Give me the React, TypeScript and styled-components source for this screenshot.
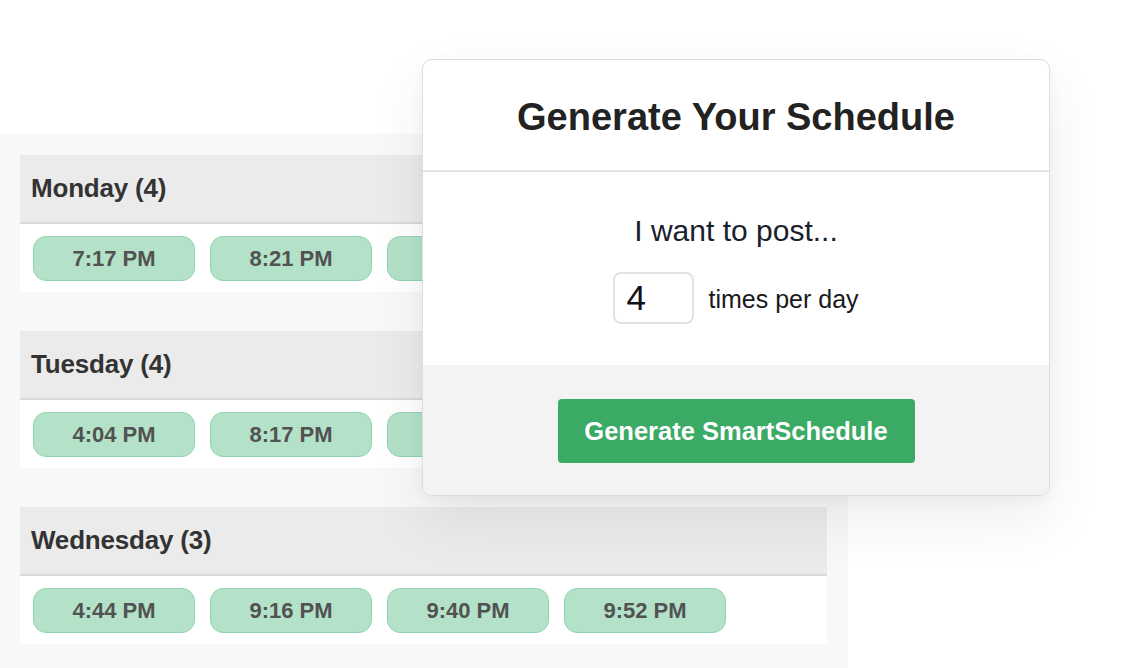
import React from "react";
import styled, { createGlobalStyle } from "styled-components";

const Global = createGlobalStyle`
  html, body { margin: 0; padding: 0; background: #ffffff; }
  body { font-family: "Liberation Sans", Arial, Helvetica, sans-serif; }
  #root { width: 1129px; height: 668px; overflow: hidden; }
`;

const Page = styled.div`
  position: relative;
  width: 1129px;
  height: 668px;
  padding-top: 134px;
  box-sizing: border-box;
  background: #ffffff;
`;

const SchedulePanel = styled.div`
  width: 848px;
  height: 534px;
  box-sizing: border-box;
  background: #f7f8fa;
  padding: 21px 21px 0 20px;
  display: flex;
  flex-direction: column;
  gap: 39px;
`;

const DaySection = styled.section`
  display: flex;
  flex-direction: column;
`;

const DayHeader = styled.div`
  height: 67px;
  background: #ebebeb;
  border-bottom: 2px solid #dadada;
  display: flex;
  align-items: center;
  padding-left: 11px;
  font-size: 26px;
  font-weight: 700;
  color: #333333;
  letter-spacing: -0.2px;
`;

const TimeRow = styled.div`
  height: 68px;
  box-sizing: border-box;
  background: #ffffff;
  display: flex;
  gap: 15px;
  padding: 12px 13px 11px;
`;

const TimePill = styled.div`
  width: 162px;
  height: 45px;
  flex: none;
  box-sizing: border-box;
  border-radius: 13px;
  background: #b3e2c9;
  border: 1px solid #92d4b0;
  display: flex;
  align-items: center;
  justify-content: center;
  font-size: 22px;
  font-weight: 700;
  color: #525252;
`;

const Modal = styled.div`
  position: absolute;
  left: 422px;
  top: 59px;
  width: 628px;
  height: 437px;
  box-sizing: border-box;
  border: 1px solid #dddddd;
  border-radius: 10px;
  background: #ffffff;
  overflow: hidden;
  display: flex;
  flex-direction: column;
  box-shadow: 0 24px 60px rgba(0, 0, 0, 0.07), 0 4px 14px rgba(0, 0, 0, 0.04);
`;

const ModalHeader = styled.div`
  height: 110px;
  flex: none;
  display: flex;
  align-items: center;
  justify-content: center;
  border-bottom: 2px solid #e4e4e4;
`;

const Title = styled.h2`
  margin: 0;
  font-size: 38px;
  font-weight: 700;
  color: #222222;
  padding-top: 4px;
`;

const ModalBody = styled.div`
  height: 193px;
  flex: none;
  display: flex;
  flex-direction: column;
  align-items: center;
  padding-top: 42px;
  box-sizing: border-box;
`;

const Prompt = styled.div`
  font-size: 30px;
  color: #1a202c;
  line-height: 34px;
`;

const InputRow = styled.div`
  margin-top: 24px;
  display: flex;
  align-items: center;
  gap: 14px;
`;

const CountInput = styled.div`
  width: 81px;
  height: 52px;
  box-sizing: border-box;
  border: 2px solid #e2e2e2;
  border-radius: 8px;
  display: flex;
  align-items: center;
  padding-left: 11px;
  font-size: 35px;
  color: #111111;
`;

const Unit = styled.span`
  font-size: 25px;
  color: #1a1a1a;
  padding-top: 3px;
`;

const ModalFooter = styled.div`
  flex: 1;
  background: #f3f3f3;
  display: flex;
  justify-content: center;
  padding-top: 34px;
  box-sizing: border-box;
`;

const GenerateButton = styled.button`
  width: 357px;
  height: 64px;
  border: none;
  border-radius: 4px;
  background: #3aaa64;
  color: #ffffff;
  font-family: "Liberation Sans", Arial, Helvetica, sans-serif;
  font-size: 25.5px;
  font-weight: 700;
  cursor: pointer;
`;

const days = [
  { name: "Monday", count: 4, times: ["7:17 PM", "8:21 PM", "9:02 PM"] },
  { name: "Tuesday", count: 4, times: ["4:04 PM", "8:17 PM", "9:11 PM"] },
  { name: "Wednesday", count: 3, times: ["4:44 PM", "9:16 PM", "9:40 PM", "9:52 PM"] },
];

export default function App() {
  return (
    <>
      <Global />
      <Page>
        <SchedulePanel>
          {days.map((d) => (
            <DaySection key={d.name}>
              <DayHeader>
                {d.name} ({d.count})
              </DayHeader>
              <TimeRow>
                {d.times.map((t) => (
                  <TimePill key={t}>{t}</TimePill>
                ))}
              </TimeRow>
            </DaySection>
          ))}
        </SchedulePanel>
        <Modal>
          <ModalHeader>
            <Title>Generate Your Schedule</Title>
          </ModalHeader>
          <ModalBody>
            <Prompt>I want to post...</Prompt>
            <InputRow>
              <CountInput>4</CountInput>
              <Unit>times per day</Unit>
            </InputRow>
          </ModalBody>
          <ModalFooter>
            <GenerateButton>Generate SmartSchedule</GenerateButton>
          </ModalFooter>
        </Modal>
      </Page>
    </>
  );
}
